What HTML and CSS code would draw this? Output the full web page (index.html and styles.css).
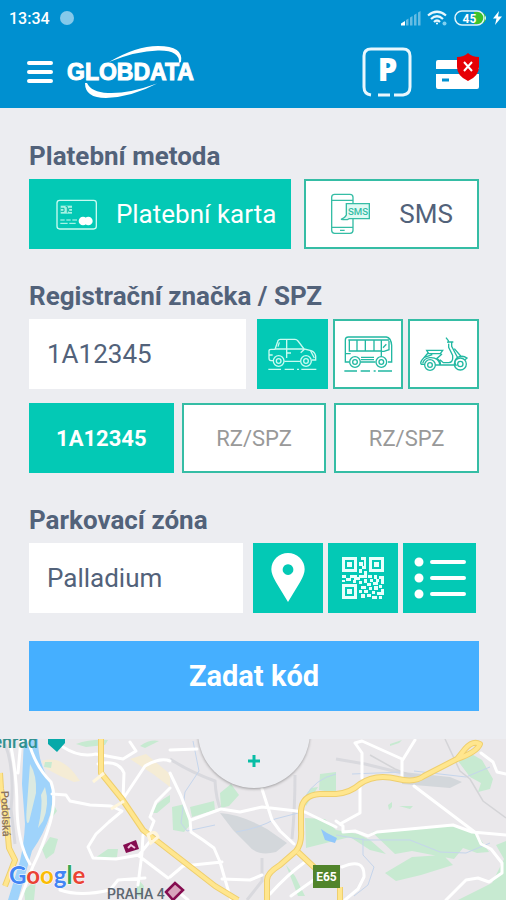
FILE: index.html
```html
<!DOCTYPE html>
<html lang="cs">
<head>
<meta charset="utf-8">
<meta name="viewport" content="width=device-width, initial-scale=1">
<title>Globdata</title>
<link rel="stylesheet" href="styles.css">
</head>
<body>
<header class="header">
  <div class="status">
    <span class="clock">13:34</span>
    <span class="dot"></span>
    <span class="indicators">
      <svg width="20" height="16" viewBox="0 0 20 16" fill="#fff"><path d="M0 15.500V13.500L4 11V15.500Z"/><g opacity=".4"><path d="M5 10l2.500-1.500V15.500H5zM9 7.500L11.500 6V15.500H9zM13 5l2.500-1.500V15.500H13zM17 2.500L19.500 1V15.500H17z"/></g></svg>
      <svg class="wifi" width="21" height="16" viewBox="0 0 21 16" fill="none" stroke="#e6f7fd" stroke-width="2.200"><path d="M1 5.500Q10 -2 19 5.500M4 9Q10 3.500 16 9M7 12Q10 9 13 12"/><circle cx="10" cy="13.500" r="1" fill="#fff" stroke="none"/><circle cx="17.500" cy="13.500" r="2" fill="#7fd0f0" stroke="none"/></svg>
      <svg class="battery" width="33" height="16" viewBox="0 0 33 16"><path d="M20 2h6a6 6 0 0 1 0 12h-6z" fill="#3cc22e"/><rect x="1" y="1" width="29" height="14" rx="7" fill="none" stroke="#dff3fb" stroke-width="1.500"/><path d="M31 5.500q2 2.500 0 5z" fill="#dff3fb"/><text x="15.500" y="12.500" text-anchor="middle" class="battery-text">45</text></svg>
      <svg width="9" height="14" viewBox="0 0 9 14" fill="#fff"><path d="M6 0L0 7.500h3.500L2 14 9 5.500H5z"/></svg>
    </span>
  </div>
  <div class="toolbar">
    <button class="icon-btn" aria-label="Menu"><svg width="26" height="24" viewBox="0 0 26 24" stroke="#fff" stroke-width="4" stroke-linecap="round"><path d="M2 3h22M2 12h22M2 21h22"/></svg></button>
    <a class="logo" href="#" aria-label="Globdata"><svg width="132" height="56" viewBox="0 0 132 56" fill="#fff"><path d="M43 18Q70 2 92 2Q118 2 115 18L113 19Q114 6 92 6.500Q70 7 43 18ZM19 39Q19 54 40 54Q66 53 91 39.500Q62 50 42 49Q25 48 21 39Z"/><text x="1" y="36" class="logo-text">GLOBDATA</text></svg></a>
    <button class="icon-btn parking" aria-label="Parkování"><svg width="50" height="50" viewBox="0 0 50 50"><path d="M9 48Q2 47 2 40V9Q2 2 9 2H41Q48 2 48 9V40Q48 47 41 48H32M16 48H28" fill="none" stroke="#e9f7fd" stroke-width="3"/><text x="25.500" y="34" text-anchor="middle" class="parking-text">P</text></svg></button>
    <button class="icon-btn" aria-label="Karta"><svg width="44" height="38" viewBox="0 0 44 38"><path d="M0 16V9Q0 7 2 7H40Q43 7 43 10V16ZM0 21H43V34Q43 36 41 36H2Q0 36 0 34Z" fill="#fff"/><path d="M6 27h7" stroke="#0090d0" stroke-width="3"/><path d="M32 0Q36 4 43 4V14Q43 23 32 28Q21 23 21 14V4Q28 4 32 0Z" fill="#e60005"/><path d="M28 9l8 9M36 9l-8 9" stroke="#fff" stroke-width="2"/></svg></button>
  </div>
</header>

<main class="panel">
  <section class="section">
    <h2 class="title">Platební metoda</h2>
    <div class="row methods">
      <button class="tile active method card"><svg width="41" height="31" viewBox="109 190 123 93" fill="none" stroke="#c9fbf1" stroke-width="4"><rect x="112" y="194" width="118" height="86" rx="8"/><rect x="123" y="210" width="34" height="24" fill="#a6f3e4" stroke="none"/><path d="M123 218h10v9h-10M157 218h-10v9h10M138 213h5v18" stroke="#00b8a4" stroke-width="3"/><path d="M122 253h13M140 253h13M158 253h14M122 263h22M149 263h19" stroke-width="3"/><circle cx="190" cy="256" r="13" fill="#fff" stroke="none"/><circle cx="206" cy="256" r="13" fill="#fff" stroke="none"/></svg><span>Platební karta</span></button>
      <button class="tile method sms"><svg width="41" height="42" viewBox="125 83 123 126" fill="none" stroke="#35bda5" stroke-width="4"><rect x="130" y="87" width="64" height="117" rx="9"/><path d="M130 105h64M130 186h64M155 195h14" /><path d="M174 115h69v45H182Q176 165 158 162Q170 158 174 149Z" fill="#e0faf4"/><text x="209" y="149" text-anchor="middle" class="bubble-text">SMS</text></svg><span>SMS</span></button>
    </div>
  </section>

  <section class="section">
    <h2 class="title"><label for="plate">Registrační značka / SPZ</label></h2>
    <div class="row vehicles">
      <input class="field" id="plate" type="text" value="1A12345">
      <div class="row types">
        <button class="tile active" aria-label="Auto"><svg width="50" height="36" viewBox="49 76 150 108" fill="none" stroke="#c9fbf1" stroke-width="4"><path d="M70 150H61Q55 150 55 142V121Q55 116 61 116H73L82 90Q84 86 89 86H133Q138 86 142 91L160 115L181 120Q192 123 195 136V148H184M101 152H148"/><path d="M82 108L86 95M74 115H160M108 87V142M108 127H121M150 126L162 115M180 121L191 142M55 133H66"/><circle cx="84" cy="151" r="16"/><circle cx="84" cy="151" r="7"/><circle cx="166" cy="151" r="16"/><circle cx="166" cy="151" r="7"/><path d="M53 176H91M102 176H130M139 176H145M152 176H197"/></svg></button>
        <button class="tile" aria-label="Autobus"><svg width="50" height="38" viewBox="277 74 150 114" fill="none" stroke="#22b8a2" stroke-width="4"><path d="M295 155H284V89Q284 80 293 80H407Q421 82 423 105V155H412M331 155H374M331 141H370M331 148H370"/><path d="M293 89H415M296 89V122H392V89M319 89V122M344 89V122M370 89V122M392 122V139M415 92V118L400 123H392M284 130H300M397 112L407 102"/><circle cx="313" cy="155" r="16"/><circle cx="313" cy="155" r="7"/><circle cx="392" cy="155" r="16"/><circle cx="392" cy="155" r="7"/><path d="M281 182H319M330 182H358M369 182H375M382 182H424"/></svg></button>
        <button class="tile" aria-label="Skútr"><svg width="50" height="36" viewBox="505 76 150 108" fill="none" stroke="#22b8a2" stroke-width="4"><path d="M586 81L593 90L591 97M593 94H608M603 95V107L623 145M594 99V110L606 134Q608 156 594 156H578L568 147M611 114L630 136M528 119H576L569 129H534ZM532 127L513 149Q508 157 512 161H523M554 163H616Q608 151 619 141Q635 132 649 142L643 147M574 130L558 144Q571 150 569 163M568 163Q564 139 537 141Q520 143 516 158M521 140L545 132"/><circle cx="538" cy="163" r="16"/><circle cx="538" cy="163" r="7"/><circle cx="629" cy="160" r="18"/><circle cx="629" cy="160" r="8"/></svg></button>
      </div>
    </div>
    <div class="row saved">
      <button class="tile active">1A12345</button>
      <button class="tile">RZ/SPZ</button>
      <button class="tile">RZ/SPZ</button>
    </div>
  </section>

  <section class="section">
    <h2 class="title"><label for="zone">Parkovací zóna</label></h2>
    <div class="row zone">
      <input class="field" id="zone" type="text" value="Palladium">
      <div class="row types">
        <button class="tile active" aria-label="Mapa"><svg width="34" height="50" viewBox="78 55 102 150" fill="#fff" fill-rule="evenodd"><path d="M129 202L93 143Q79 119 79 104A50 49 0 0 1 179 104Q179 119 165 143ZM129 89a16 16 0 1 0 .1 0Z"/></svg></button>
        <button class="tile active" aria-label="QR kód"><svg width="42" height="42" viewBox="0 0 42 42" fill="#e8fffb"><path fill-rule="evenodd" d="M0 0h15v15H0zM3 3v9h9V3zM27 0h15v15H27zM30 3v9h9V3zM0 27h15v15H0zM3 30v9h9v-9z"/><path d="M5 5h5v5H5zM32 5h5v5h-5zM5 32h5v5H5zM19 0h5v3h-5zM17 5h4v4h-4zM22 3h2v9h-4v-3h2zM17 12h3v4h-3zM22 14h3v5h-3zM0 18h4v3H0zM4 21h5v3H4zM8 18h7v3H8zM12 20h6v3h-6zM17 18h8v3h-8zM0 23h3v2H0zM11 23h3v3h-3zM17 24h3v3h-3zM22 22h3v4h-3zM26 18h4v3h-4zM32 18h3v4h-3zM37 19h5v3h-5zM28 22h3v3h-3zM34 22h3v3h-3zM39 22h3v5h-3zM25 26h4v3h-4zM31 25h5v3h-5zM19 29h5v3h-5zM27 30h3v3h-3zM32 29h4v4h-4zM37 28h3v3h-3zM17 33h3v3h-3zM22 33h4v3h-4zM30 34h3v3h-3zM35 35h7v3h-7zM39 32h3v3h-3zM19 37h4v4h-4zM25 37h4v3h-4zM30 39h5v3h-5zM37 39h3v3h-3z"/></svg></button>
        <button class="tile active" aria-label="Seznam"><svg width="52" height="42" viewBox="0 0 52 42" fill="#fff" stroke="#fff" stroke-width="4" stroke-linecap="round"><path d="M18 5h32M18 21h32M18 37h32"/><circle cx="5" cy="5" r="2.500"/><circle cx="5" cy="21" r="2.500"/><circle cx="5" cy="37" r="2.500"/></svg></button>
      </div>
    </div>
  </section>

  <button class="submit">Zadat kód</button>
</main>

<div class="map">
  <svg class="map-art" viewBox="0 0 506 161" preserveAspectRatio="xMidYMin slice">
    <rect width="506" height="161" fill="#eae8eb"/>
    <g fill="none" stroke="#d9d9de" stroke-width="5"><path d="M5 5Q15 30 11 70L15 105M170 20Q190 33 215 42Q216 60 221 72M295 36Q295 70 292 100M336 20L365 25L410 36M262 119V142L247 161" stroke-width="3"/></g>
    <g fill="#f5ecd5"><path d="M42 22Q60 16 75 35L80 42L74 43L60 37L45 29ZM130 20L146 15L170 35V48L153 35Z"/></g>
    <g fill="#c7ead1">
      <path d="M76 5Q90 0 108 1L105 6L86 8ZM140 7Q150 0 159 2L145 9ZM45 23l7 0-1 6-7-1ZM151 74Q155 64 170 56V63L157 74ZM95 119L108 110L118 110L117 118L103 121ZM50 98L58 100L54 114L46 120L42 110ZM47 42L53 48L50 58L57 72L51 80L48 68ZM137 139L144 147L142 159L137 156ZM220 54L231 45L239 56L229 67L221 69ZM172 68L185 65L190 86L184 93L173 91ZM190 68L214 62L215 71L192 78ZM320 35L336 33V54L319 51ZM286 126L295 137L305 157H298ZM303 60L311 49L318 48L306 67ZM24 151L36 141L34 161H25Z"/>
      <path d="M372 93Q415 88 458 87L477 95L489 113L477 114L463 109L454 120L438 117L412 112L395 115ZM385 134L412 118L443 116L453 126L421 136L396 142ZM458 22L468 13L482 21L493 40L490 50L478 53L481 44L470 38ZM506 102L496 106L504 120L492 144L458 161H506ZM305 79L325 80L336 91L358 95L370 101L386 115L370 111L350 98L306 109ZM390 5l12-4-3 3-9 3ZM388 66l4-3v5l-3 3ZM399 67h14l-3 3Z"/>
    </g>
    <path d="M220 74Q240 75 267 90L287 104L276 113Q257 118 248 106L233 91ZM403 33L450 38L462 43L450 49L402 45Z" fill="#d3d7db"/>
    <path d="M24 0H38Q38 25 50 42Q55 55 50 76Q44 95 32 112L18 161H8L20 122Q24 105 25 85L22 45Q23 20 24 0Z" fill="#9fd3fb"/>
    <path d="M30 25Q37 36 36 54L29 83Q25 88 27 66ZM45 48Q50 65 43 82L38 89Q43 67 41 56Z" fill="#dceae1"/>
    <path d="M321 90L327 94L337 99L335 104L325 101Z" fill="#91c7fa"/>
    <g fill="none" stroke="#c5d5ec" stroke-width="1"><path d="M193 2L199 32L185 53L181 84L187 92L215 86M236 93Q260 89 275 80L302 73M305 58Q315 40 336 35M336 96L365 101L410 101L440 113L466 114L490 104M363 99V116L374 128L368 146L354 157M414 32L466 38L490 28M352 35L402 33"/></g>
    <path d="M370 16L395 30L415 38M445 0L460 32L470 40L483 62L506 79" fill="none" stroke="#d4d4d7" stroke-width="1.500"/>
    <g fill="none" stroke="#fff" stroke-width="3" stroke-linecap="round" stroke-linejoin="round">
      <path d="M10 3Q17 35 17 70Q18 105 30 125M28 0Q34 26 51 43Q57 59 50 84Q43 107 33 127L20 161M21 0L18 34M52 55L66 56L70 62L90 66L111 67L122 72L109 83L96 95L88 108L93 119L116 120L139 116L151 101M63 8Q80 19 96 15L123 20L136 12L130 3M98 25Q118 20 124 34L123 60L145 27Q160 18 170 22M170 49L156 63L150 78L154 82L150 92M143 96L142 114L138 146M139 117L168 139M60 151Q80 158 110 151L118 141L145 139"/>
      <path d="M170 11L197 10M170 34L181 57L190 81L191 93L203 101L214 109L220 123L231 161M170 138L183 127L222 123M191 81L221 70L240 73L262 68L305 73L336 88M262 50L272 81L280 92L294 105M222 140L250 141L262 136M270 155Q287 136 305 123M291 157L315 140M188 161L176 151"/>
      <path d="M336 82L343 87L343 93L355 92L368 97L377 93L410 90L453 86L472 93L506 96M362 39V14L355 4L362 2L402 20V38M402 22L415 1M360 44V74L340 85M414 47L476 94L481 105L491 110L502 124L502 134L489 143L478 139L466 141L446 161M481 14L493 23L497 33L506 35M342 128Q365 118 364 138L358 150L345 161"/>
    </g>
    <g fill="none" stroke="#efcf6e" stroke-width="6" stroke-linejoin="round"><path d="M101 0V34L122 60L143 91L170 112L215 147L238 161"/><path d="M267 161V141Q267 134 280 126L296 112Q302 105 301 91V72Q302 56 320 55L336 55Q350 54 360 45Q375 34 398 40Q415 44 424 37L457 20L465 10Q473 1 480 5Q477 13 457 20M298 113L315 129M340 148V161M0 34L1 50L6 75L9 109L15 121L5 147"/></g>
    <g fill="none" stroke="#ffe68e" stroke-width="4" stroke-linejoin="round"><path d="M101 0V34L122 60L143 91L170 112L215 147L238 161M267 161V141Q267 134 280 126L296 112Q302 105 301 91V72Q302 56 320 55L336 55Q350 54 360 45Q375 34 398 40Q415 44 424 37L457 20L465 10Q473 1 480 5Q477 13 457 20M298 113L315 129M340 148V161M0 34L1 50L6 75L9 109L15 121L5 147"/></g>
    <path d="M93 43L104 34M111 70L124 62M148 96Q155 90 158 98L151 104Z" stroke="#fff6dc" stroke-width="3" fill="none"/>
    <path d="M48 0H65V4L57 13L48 5Z" fill="#07a9a9"/>
    <text x="38" y="9" text-anchor="end" class="map-place">Vyšehrad</text>
    <text transform="translate(1 52) rotate(88)" class="map-street">Podolská</text>
    <path d="M123 106L136 101L139 110L126 114Z" fill="#850c50"/><path d="M128 109l3-3 4 3" stroke="#f3c5df" stroke-width="2" fill="none"/>
    <path d="M166 153L175 144L183 151L173 161Z" fill="#d8a4bc" stroke="#850c50" stroke-width="2.500"/>
    <text x="107" y="160" class="map-district">PRAHA 4</text>
    <g><rect x="313" y="126" width="27" height="23" fill="#51842b"/><text x="326.500" y="142" text-anchor="middle" class="map-road">E65</text></g>
    <text x="9" y="145" class="google"><tspan fill="#4285f4">G</tspan><tspan fill="#ea4335">o</tspan><tspan fill="#fbbc05">o</tspan><tspan fill="#4285f4">g</tspan><tspan fill="#34a853">l</tspan><tspan fill="#ea4335">e</tspan></text>
  </svg>
  <button class="expand" aria-label="Rozbalit"><svg width="12" height="12" viewBox="0 0 12 12" stroke="#08bda5" stroke-width="3"><path d="M6 0v12M0 6h12"/></svg></button>
</div>
</body>
</html>
```
FILE: styles.css
```css
* {
  box-sizing: border-box;
}

body {
  margin: 0;
  min-height: 100vh;
  display: flex;
  flex-direction: column;
  font-family: Roboto, "Liberation Sans", sans-serif;
  background: #ecedf1;
  color: #52627a;
}

button,
input {
  font: inherit;
  color: inherit;
  border: 0;
  border-radius: 0;
  padding: 0;
  margin: 0;
}

svg {
  display: block;
  flex: none;
}

.header {
  background: #0090d0;
  color: #fff;
}

.status {
  display: flex;
  align-items: center;
  height: 36px;
  padding: 0 4px 0 9px;
}

.clock {
  font-size: 16px;
  font-weight: 500;
}

.dot {
  width: 14px;
  height: 14px;
  margin-left: 10px;
  border-radius: 50%;
  background: #85c9ea;
}

.indicators {
  display: flex;
  align-items: center;
  gap: 6px;
  margin-left: auto;
}

.battery-text {
  font-size: 12px;
  font-weight: 700;
  fill: #fff;
}

.toolbar {
  display: flex;
  align-items: center;
  height: 72px;
  padding: 0 26px 0 27px;
}

.icon-btn {
  background: none;
}

.logo {
  margin-left: 13px;
}

.logo-text {
  font-family: "Liberation Sans", sans-serif;
  font-size: 23px;
  font-weight: 700;
  stroke: #fff;
  stroke-width: 1px;
}

.parking {
  margin: 0 24px 0 auto;
}

.parking-text {
  font-family: "Open Sans", sans-serif;
  font-size: 31px;
  font-weight: 800;
  fill: #fff;
}

.panel {
  padding: 33px 27px 28px 29px;
}

.section {
  margin-bottom: 32px;
}

.section:last-of-type {
  margin-bottom: 28px;
}

.title {
  margin: 0 0 8px;
  font-size: 26px;
  font-weight: 700;
  line-height: 30px;
}

.row {
  display: grid;
}

.methods {
  grid-template-columns: 3fr 2fr;
  gap: 13px;
}

.vehicles {
  grid-template-columns: 217fr 222fr;
  gap: 11px;
}

.zone {
  grid-template-columns: 214fr 223fr;
  gap: 10px;
  padding-right: 3px;
}

.types {
  grid-template-columns: repeat(3, 1fr);
  gap: 5px;
}

.zone .types {
  grid-template-columns: 70fr 70fr 73fr;
}

.saved {
  grid-template-columns: repeat(3, 1fr);
  gap: 8px;
  margin-top: 14px;
  font-size: 22px;
}

.tile {
  display: flex;
  align-items: center;
  justify-content: center;
  height: 70px;
  border: 2px solid #35bda5;
  background: #fff;
}

.tile.active {
  border-color: #03c9b5;
  background: #03c9b5;
  color: #fff;
}

.saved .tile {
  color: #999;
}

.saved .active {
  color: #fff;
  font-weight: 700;
}

.method {
  font-size: 26px;
}

.card {
  gap: 19px;
  padding-left: 12px;
}

.sms {
  gap: 28px;
}

.bubble-text {
  font-size: 29px;
  font-weight: 500;
  fill: #35bda5;
  stroke: none;
}

.field {
  width: 100%;
  height: 70px;
  padding: 0 18px;
  background: #fff;
  font-size: 26px;
}

.submit {
  display: block;
  width: 100%;
  height: 70px;
  background: #45afff;
  color: #fff;
  font-size: 29px;
  font-weight: 700;
}

.map {
  position: relative;
  flex: 1;
  min-height: 161px;
  overflow: hidden;
}

.map-art {
  position: absolute;
  inset: 0;
  width: 100%;
  height: 100%;
}

.expand {
  position: absolute;
  left: 50%;
  top: -63px;
  width: 112px;
  height: 112px;
  margin-left: -55px;
  padding-top: 58px;
  border-radius: 50%;
  background: #ecedf1;
  box-shadow: 0 1px 3px #00000055;
  display: flex;
  justify-content: center;
  align-items: center;
}

.map-place {
  font-size: 18px;
  font-weight: 500;
  fill: #32918f;
}

.map-street {
  font-size: 11px;
  font-weight: 500;
  fill: #8b7460;
}

.map-district {
  font-size: 14px;
  font-weight: 500;
  fill: #5c6670;
}

.map-road {
  font-size: 12px;
  font-weight: 700;
  fill: #fff;
}

.google {
  font-family: Lato, sans-serif;
  font-size: 24px;
  font-weight: 700;
  stroke: #fff;
  stroke-width: 1px;
  paint-order: stroke;
}
```
